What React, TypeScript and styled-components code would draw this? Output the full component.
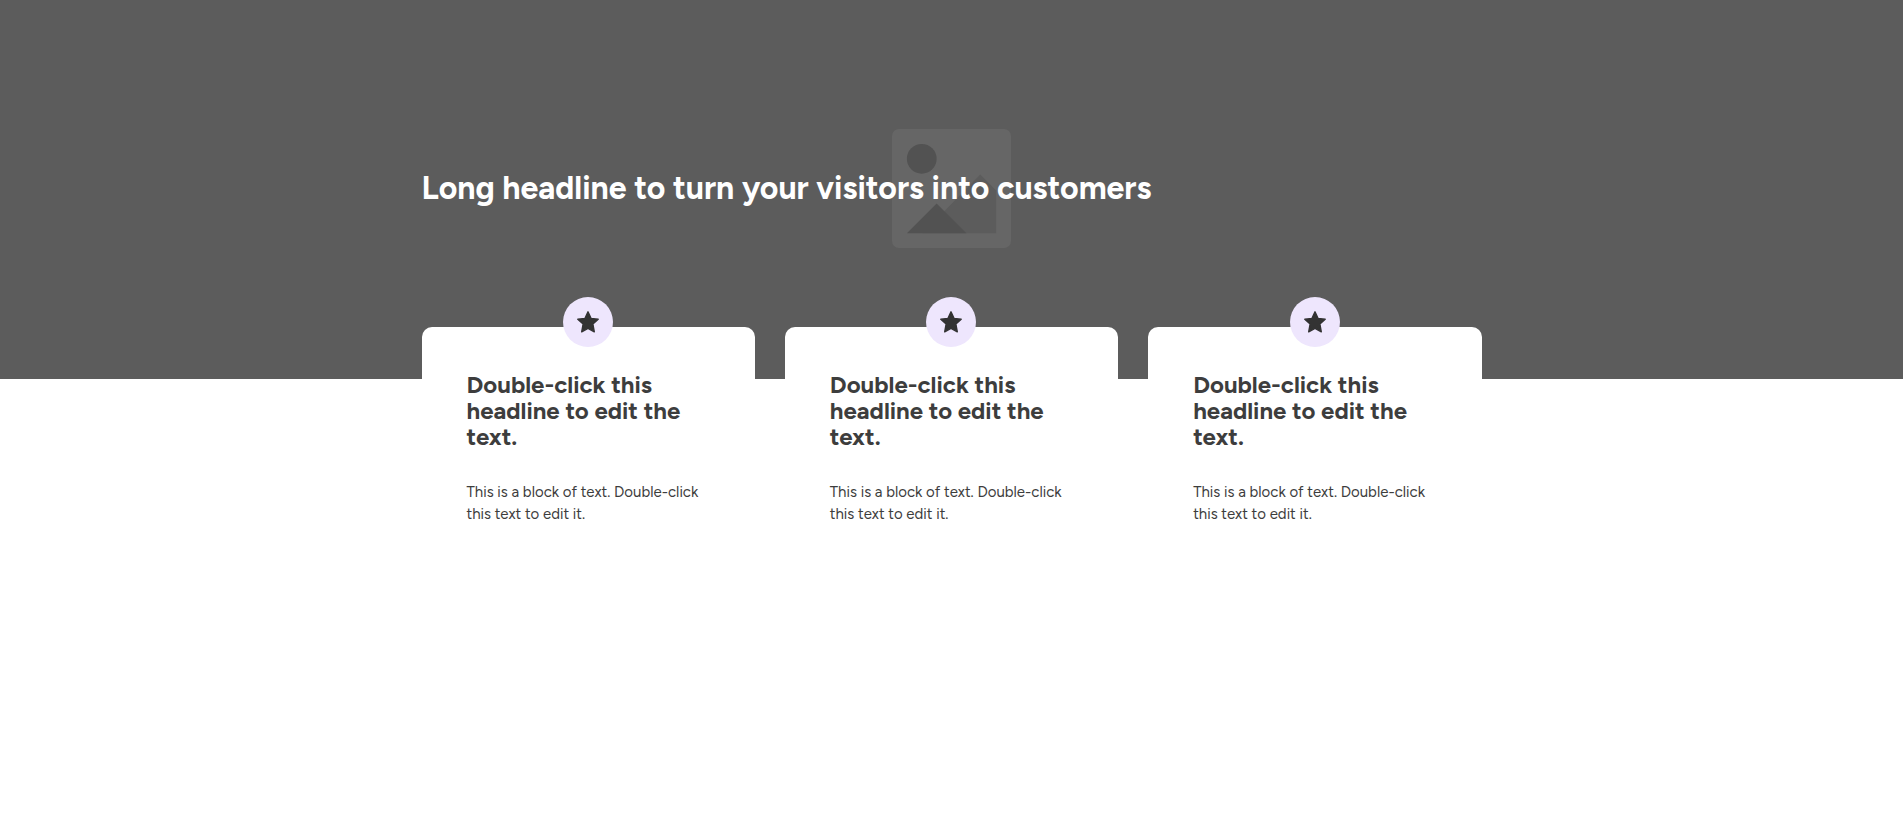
import React from "react";
import styled, { createGlobalStyle } from "styled-components";

const GlobalStyle = createGlobalStyle`
  * { box-sizing: border-box; }
  body {
    margin: 0;
    background: #fff;
    color: #3d3d3d;
    font-family: Figtree, Lato, "Liberation Sans", sans-serif;
  }
`;

const Hero = styled.header`
  display: grid;
  align-items: center;
  height: 379px;
  padding-bottom: 2px;
  background: #5c5c5c;
`;

const Placeholder = styled.svg`
  grid-area: 1 / 1;
  justify-self: center;
  width: 119px;
  height: 119px;
`;

const Container = styled.div`
  width: 100%;
  max-width: 1060px;
  margin: 0 auto;
`;

const HeroContent = styled(Container)`
  grid-area: 1 / 1;
  z-index: 1;
  padding-bottom: 2px;
`;

const Headline = styled.h1`
  margin: 0;
  color: #fff;
  font-size: 32px;
  line-height: 36px;
  font-weight: 700;
`;

const Cards = styled(Container)`
  display: grid;
  grid-template-columns: repeat(3, 1fr);
  gap: 30px;
  margin-top: -52px;
  position: relative;
`;

const Card = styled.article`
  display: flex;
  flex-direction: column;
  padding: 0 45px 45px;
  border-radius: 10px;
  background: #fff;
`;

const Badge = styled.span`
  display: flex;
  align-items: center;
  justify-content: center;
  align-self: center;
  width: 50px;
  height: 50px;
  margin-top: -30px;
  border-radius: 50%;
  background: #eee6fd;
`;

const CardTitle = styled.h2`
  margin: 25px 0 0;
  font-size: 24px;
  line-height: 26px;
  font-weight: 700;
`;

const CardText = styled.p`
  margin: 31px 0 0;
  font-size: 15px;
  line-height: 22px;
  font-weight: 400;
`;

const cards = [1, 2, 3].map((id) => ({
  id,
  title: "Double-click this headline to edit the text.",
  text: "This is a block of text. Double-click this text to edit it.",
}));

function Star() {
  return (
    <svg width="22" height="22" viewBox="0 0 22 22" aria-hidden="true">
      <path
        d="M11 .8 14 7.4 21.2 8.2 15.9 13.1 17.3 20.8 11 17.3 4.7 20.8 6.1 13.1 .8 8.2 8 7.4Z"
        fill="#333"
        stroke="#333"
        strokeWidth="1.4"
        strokeLinejoin="round"
      />
    </svg>
  );
}

export default function App() {
  return (
    <>
      <GlobalStyle />
      <Hero>
        <Placeholder viewBox="0 0 120 120" aria-hidden="true">
          <rect width="120" height="120" rx="7" fill="#666" />
          <circle cx="30" cy="30" r="15" fill="#525252" />
          <path d="M31 105 89 46 105 62V105Z" fill="#5c5c5c" />
          <path d="M15 105 45 75 75 105Z" fill="#525252" />
        </Placeholder>
        <HeroContent>
          <Headline>Long headline to turn your visitors into customers</Headline>
        </HeroContent>
      </Hero>
      <main>
        <Cards>
          {cards.map((card) => (
            <Card key={card.id}>
              <Badge>
                <Star />
              </Badge>
              <CardTitle>{card.title}</CardTitle>
              <CardText>{card.text}</CardText>
            </Card>
          ))}
        </Cards>
      </main>
    </>
  );
}
